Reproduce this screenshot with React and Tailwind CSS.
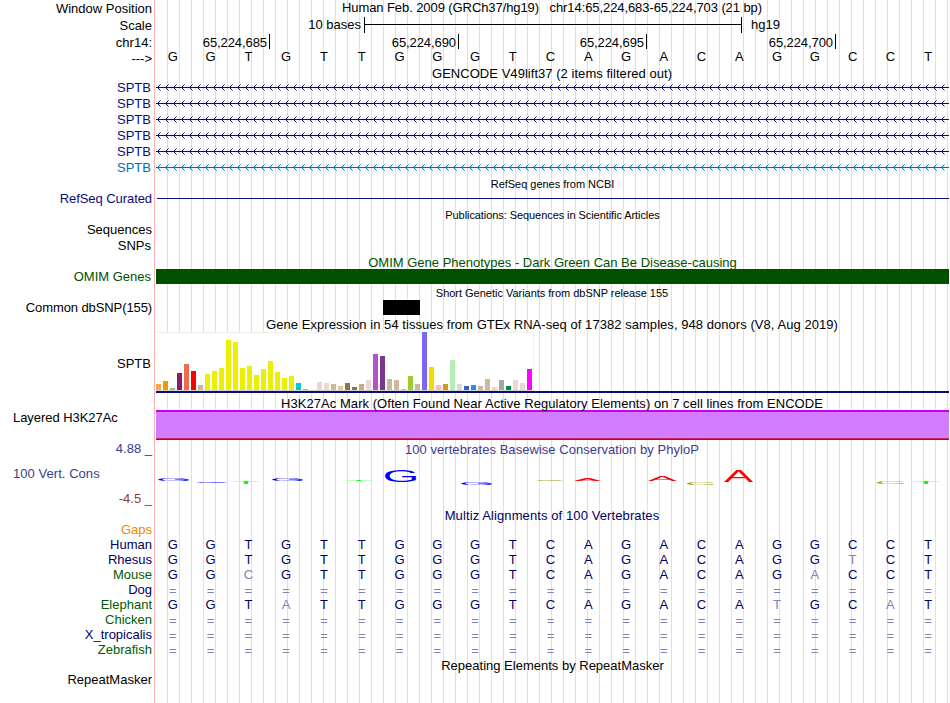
const LABELS = [
  ["Window Position", "h-[17px]"],
  ["Scale", "h-[17px]"],
  ["chr14:", "h-[16px]"],
  ["--->", "h-[29px]"],
  ["SPTB", "h-[16px] mr-px text-[#0c0c78]"],
  ["SPTB", "h-[16px] mr-px text-[#0c0c78]"],
  ["SPTB", "h-[16px] mr-px text-[#0c0c78]"],
  ["SPTB", "h-[16px] mr-px text-[#0c0c78]"],
  ["SPTB", "h-[16px] mr-px text-[#0c0c78]"],
  ["SPTB", "h-[31px] mr-px text-[#006eb4]"],
  ["RefSeq Curated", "h-[31px] tracking-[-0.07px] text-[#0c0c78]"],
  ["Sequences", "h-[16px]"],
  ["SNPs", "h-[31px] mr-px"],
  ["OMIM Genes", "h-[31px] mr-px text-[#005000]"],
  ["Common dbSNP(155)", "h-[56px] tracking-[-0.1px]"],
  ["SPTB", "h-[54px] mr-px"],
  ["Layered H3K27Ac", "h-[31px] self-start pl-[13px] tracking-[-0.05px]"],
  ["4.88 _", "h-[25px] text-[#3c3c8c]"],
  ["100 Vert. Cons", "h-[25px] self-start pl-[13px] tracking-[0.05px] text-[#3c3c8c]"],
  ["-4.5 _", "h-[31px] text-[#8c3c3c]"],
  ["Gaps", "h-[15px] text-[#e68a00]"],
  ["Human", "h-[15px] text-[#000064]"],
  ["Rhesus", "h-[15px] text-[#000064]"],
  ["Mouse", "h-[15px] text-[#005a00]"],
  ["Dog", "h-[15px] text-[#000064]"],
  ["Elephant", "h-[15px] text-[#005a00]"],
  ["Chicken", "h-[15px] text-[#005a00]"],
  ["X_tropicalis", "h-[15px] text-[#000064]"],
  ["Zebrafish", "h-[30px] text-[#005a00]"],
  ["RepeatMasker", "h-[15px]"],
];

const BASES = "GGTGTTGGGTCAGACAGGCCT";
const GAP = "=====================";

const ALIGNMENTS = [
  { species: "Human", seq: BASES },
  { species: "Rhesus", seq: "GGTGTTGGGTCAGACAGGTCT" },
  { species: "Mouse", seq: "GGCGTTGGGTCAGACAGACCT" },
  { species: "Dog", seq: GAP },
  { species: "Elephant", seq: "GGTATTGGGTCAGACATGCAT" },
  { species: "Chicken", seq: GAP },
  { species: "X_tropicalis", seq: GAP },
  { species: "Zebrafish", seq: GAP },
];

const Y = "#eeee00";
const TISSUES = [
  ["#ffa54f", 6], ["#ee9a00", 9], ["#8fbc8f", 2], ["#8b1c62", 17], ["#ee6a50", 26], ["#ff0000", 19],
  ["#cdb79e", 5], [Y, 16], [Y, 19], [Y, 22], [Y, 50], [Y, 48], [Y, 22], [Y, 24], [Y, 15], [Y, 21],
  [Y, 29], [Y, 18], [Y, 12], [Y, 14], ["#00cdcd", 7], ["#ee82ee", 1], ["#9ac0cd", 0], ["#eed5d2", 8],
  ["#eed5d2", 7], ["#cdb79e", 6], ["#eec591", 4], ["#8b7355", 7], ["#8b7355", 3], ["#cdaa7d", 6],
  ["#eed5d2", 10], ["#b452cd", 36], ["#7a378b", 34], ["#cdb79e", 11], ["#cdb79e", 10], ["#cdb79e", 1],
  ["#9acd32", 14], ["#cdb79e", 6], ["#7a67ee", 58], ["#ffd700", 23], ["#ffb6c1", 5], ["#cd9b1d", 6],
  ["#b4eeb4", 30], ["#d9d9d9", 6], ["#3a5fcd", 4], ["#1e90ff", 5], ["#cdb79e", 4], ["#cdb79e", 11],
  ["#ffd39b", 3], ["#a6a6a6", 10], ["#008b45", 4], ["#eed5d2", 10], ["#eed5d2", 7], ["#ff00ff", 21],
];

// Letter, left, right, top and bottom inside the 793x51 conservation plot.
const LOGO = [
  ["G", 2, 33, 21, 24],
  ["G", 41, 71, 25, 26],
  ["T", 77, 103, 25, 27],
  ["G", 116, 147, 21, 24],
  ["T", 190, 216, 23, 24],
  ["G", 229, 260.5, 13, 25],
  ["G", 305, 336, 25, 28],
  ["C", 381, 408, 23, 24],
  ["A", 418, 445, 22, 24],
  ["A", 492, 520.5, 19, 24],
  ["C", 531, 559, 25, 28],
  ["A", 568, 597, 14, 25],
  ["C", 721, 749, 25, 27],
  ["T", 757, 783, 25, 27],
];
const INK = {
  G: { left: 5, width: 67, height: 71, base: 1, color: "#0000ff" },
  C: { left: 5, width: 64, height: 71, base: 1, color: "#a0a000" },
  A: { left: 0, width: 66, height: 69, base: 0, color: "#ff0000" },
  T: { left: 2, width: 57, height: 69, base: 0, color: "#00ff00" },
};

function Title({ className, children }) {
  return <div className={`whitespace-pre text-center ${className}`}>{children}</div>;
}

function BaseRow({ seq, cell }) {
  return (
    <div className="grid h-[15px] grid-cols-[repeat(21,minmax(0,1fr))] text-center">
      {seq.split("").map((b, i) => (
        <span key={i} className={`pr-1 ${cell ? cell(b, i) : ""}`}>{b}</span>
      ))}
    </div>
  );
}

function GeneRow({ id, color }) {
  return (
    <svg className="block h-4 w-full" width="793" height="16" shapeRendering="crispEdges">
      <defs>
        <pattern id={id} width="8" height="16" patternUnits="userSpaceOnUse">
          <g fill={color}>
            <rect x="2" y="6" width="1" height="3" />
            <rect x="3" y="5" width="1" height="1" />
            <rect x="3" y="9" width="1" height="1" />
            <rect x="4" y="4" width="1" height="1" opacity="0.5" />
            <rect x="4" y="10" width="1" height="1" opacity="0.5" />
          </g>
        </pattern>
      </defs>
      <rect width="793" height="16" fill={`url(#${id})`} />
      <rect y="7" width="793" height="1" fill={color} />
    </svg>
  );
}

function alignmentCell(b, i) {
  if (b === "=") return "pt-px text-[#8082b4]";
  return b === BASES[i] ? "text-[#000064]" : "text-[#8082b4]";
}

export default function App() {
  return (
    <div className="flex h-[703px] w-[950px] overflow-hidden bg-white font-['Liberation_Sans',Arial,sans-serif] text-[13px] leading-[15px] text-black">
      <div className="flex w-[155px] shrink-0 flex-col items-end border-r border-[#ffb4b4] pt-px">
        {LABELS.map(([text, cls], i) => (
          <div key={i} className={`shrink-0 whitespace-pre pr-[2px] ${cls}`}>{text}</div>
        ))}
      </div>

      <div className="ml-px w-[793px] shrink-0 bg-[repeating-linear-gradient(to_right,transparent_0px,transparent_11px,#dcdcff_11px,#dcdcff_12px)]">
        <Title className="h-[17px] pr-px tracking-[-0.085px]">
          {"Human Feb. 2009 (GRCh37/hg19)   chr14:65,224,683-65,224,703 (21 bp)"}
        </Title>

        <div className="flex h-[17px]">
          <div className="w-[208px] pr-[3px] text-right">10 bases</div>
          <div className="h-[16px] w-[378px] border-x border-black pt-[7px]">
            <div className="h-px bg-black" />
          </div>
          <div className="ml-[9px]">hg19</div>
        </div>

        <div className="flex h-[15px] text-right tracking-[-0.08px]">
          <div className="h-[15px] w-[114px] border-r border-black pr-[2px] pt-px">65,224,685</div>
          <div className="h-[15px] w-[189px] border-r border-black pr-[2px] pt-px">65,224,690</div>
          <div className="h-[15px] w-[188px] border-r border-black pr-[2px] pt-px">65,224,695</div>
          <div className="h-[15px] w-[189px] border-r border-black pr-[2px] pt-px">65,224,700</div>
        </div>

        <div className="h-[17px]">
          <BaseRow seq={BASES} />
        </div>

        <Title className="h-[14px] pr-px tracking-[0.04px]">GENCODE V49lift37 (2 items filtered out)</Title>
        {[0, 1, 2, 3, 4].map((i) => (
          <GeneRow key={i} id={`coding-${i}`} color="#0c0c78" />
        ))}
        <GeneRow id="noncoding" color="#006eb4" />

        <Title className="h-[22px] pt-[2px] text-[11px] leading-[12px] tracking-[-0.03px]">RefSeq genes from NCBI</Title>
        <div className="ml-px h-px bg-[#0c0c78]" />
        <Title className="h-[56px] pt-[10px] text-[11px] leading-[12px] tracking-[-0.07px]">
          Publications: Sequences in Scientific Articles
        </Title>

        <Title className="h-[14px] text-[#005000]">OMIM Gene Phenotypes - Dark Green Can Be Disease-causing</Title>
        <div className="h-[15px] bg-[#005000]" />

        <Title className="h-[16px] pt-[3px] pr-px text-[11px] leading-[12px] tracking-[-0.02px]">
          Short Genetic Variants from dbSNP release 155
        </Title>
        <div className="ml-[227px] h-[15px] w-[37px] bg-black" />

        <Title className="h-[17px] pt-[2px] pr-px tracking-[0.05px]">
          Gene Expression in 54 tissues from GTEx RNA-seq of 17382 samples, 948 donors (V8, Aug 2019)
        </Title>
        <div className="flex h-[59px] w-[378px] items-end gap-[2px] border-b border-[#d2d2d2] bg-white shadow-[inset_0_1px_0_#f0f0f0,inset_-1px_0_0_#f0f0f0]">
          {TISSUES.map(([color, h], i) => (
            <div key={i} className="w-[5px] shrink-0" style={{ height: h, backgroundColor: color }} />
          ))}
        </div>
        <div className="h-[2px] bg-[#0c0c78]" />

        <Title className="h-[17px] pt-[3px] pr-px tracking-[0.05px]">
          H3K27Ac Mark (Often Found Near Active Regulatory Elements) on 7 cell lines from ENCODE
        </Title>
        <div className="h-[30px] border-t-2 border-[#c800f0] bg-[#d27dff] pt-[26px]">
          <div className="h-px bg-[#d22364]" />
          <div className="h-px bg-[#5a2850]" />
        </div>

        <Title className="h-[17px] pt-[2px] pr-px tracking-[0.04px] text-[#3c3c8c]">
          100 vertebrates Basewise Conservation by PhyloP
        </Title>
        <svg className="block" width="793" height="51" fontSize="100">
          {LOGO.map(([letter, x0, x1, y0, y1], i) => {
            const ink = INK[letter];
            const sx = (x1 - x0) / ink.width;
            const sy = (y1 - y0) / ink.height;
            return (
              <text key={i} x={-ink.left} y={-ink.base} fill={ink.color} transform={`translate(${x0} ${y1}) scale(${sx} ${sy})`}>
                {letter}
              </text>
            );
          })}
        </svg>

        <Title className="h-[29px] pr-px tracking-[0.1px] text-[#000064]">Multiz Alignments of 100 Vertebrates</Title>
        {ALIGNMENTS.map(({ species, seq }) => (
          <BaseRow key={species} seq={seq} cell={alignmentCell} />
        ))}
        <Title className="pt-px">Repeating Elements by RepeatMasker</Title>
      </div>
    </div>
  );
}
